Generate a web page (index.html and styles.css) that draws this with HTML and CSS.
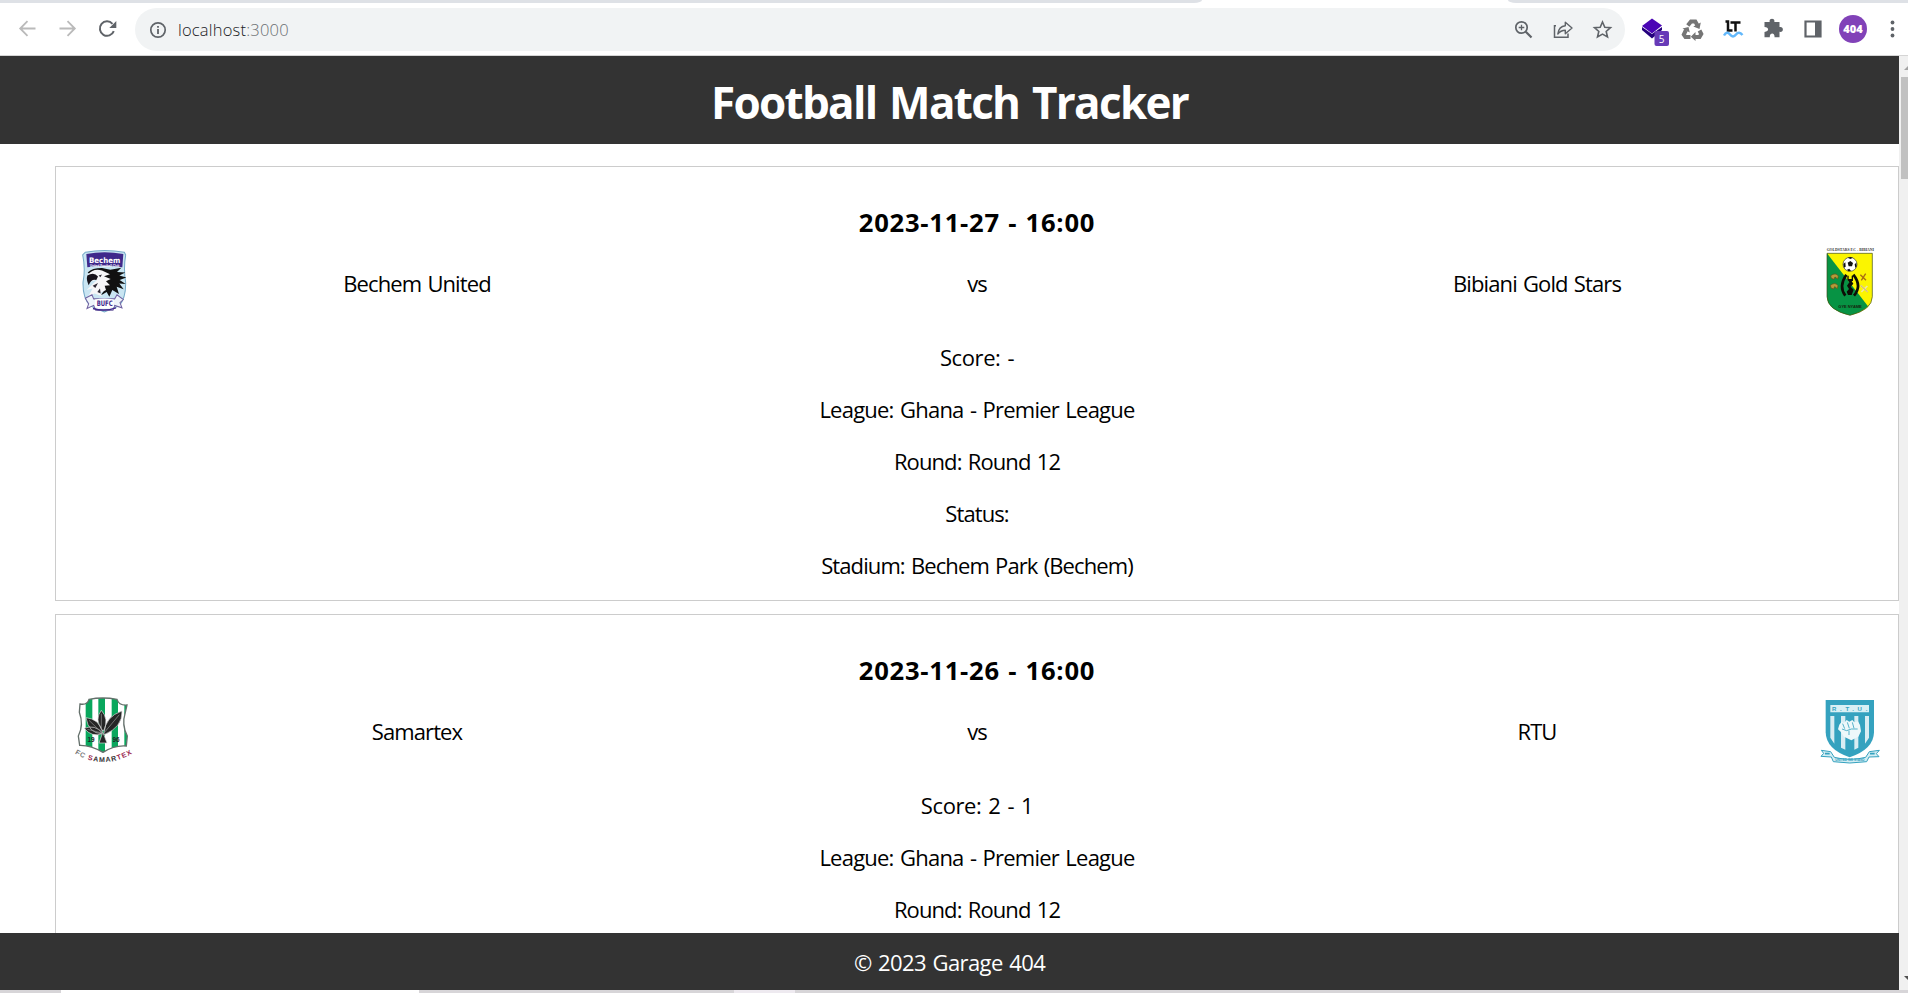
FILE: index.html
```html
<!DOCTYPE html>
<html lang="en">
<head>
<meta charset="utf-8">
<title>Football Match Tracker</title>
<link rel="stylesheet" href="styles.css">
</head>
<body>
<div class="browser">
  <div class="tabs"><div class="tab-before"></div><div class="active-tab"></div><div class="tab-after"></div></div>
  <div class="toolbar">
    <svg class="nav" width="120" height="52" viewBox="0 0 120 52" fill="none" stroke-width="1.8">
      <g stroke="#bababa"><path d="M35.500 25.500H20.500M27.500 18.200L20.200 25.500L27.500 32.800"/><path d="M59.500 25.500H74.500M67.500 18.200L74.800 25.500L67.500 32.800"/></g>
      <path d="M113.800 28.200A7.200 7.200 0 1 1 112.500 20.800" stroke="#5f6368" stroke-width="2"/><path d="M116.300 18V25H109.300Z" fill="#5f6368"/>
    </svg>
    <div class="omnibox">
      <svg class="info" width="18" height="18" viewBox="0 0 18 18"><circle cx="9" cy="9" r="7.200" fill="none" stroke="#5f6368" stroke-width="1.700"/><path d="M8.100 8h1.800v5H8.100zM8.100 5h1.800v1.800H8.100z" fill="#5f6368"/></svg>
      <span class="url">localhost<span class="port">:3000</span></span>
      <svg class="actions" width="110" height="44" viewBox="0 0 110 44" fill="none" stroke="#5f6368" stroke-width="1.700">
        <circle cx="16.500" cy="19.500" r="5.700"/><path d="M20.800 23.800L26.500 29.500" stroke-width="2.200"/><path d="M13.700 19.500h5.600M16.500 16.700v5.600" stroke-width="1.300"/>
        <path d="M51 17.800H49.500V29.300H63V25.500" stroke-width="1.500"/><path d="M52.800 26C53.500 20.500 56.500 18.200 60.300 17.800V14.200L67 20L60.300 25.700V22.200C57 22.200 54.800 23.300 52.800 26Z" stroke-width="1.400" stroke-linejoin="round"/>
        <path d="M97.500 14L99.800 19.200L105.500 19.700L101.200 23.500L102.500 29L97.500 26.100L92.500 29L93.800 23.500L89.500 19.700L95.200 19.200Z" stroke-width="1.600"/>
      </svg>
    </div>
    <svg class="extensions" width="283" height="52" viewBox="0 0 283 52">
      <g transform="translate(-1 0)">
      <path d="M18 24L28 31L38 24V27L28 35.500L18 27Z" fill="#24007d"/><path d="M28 15.500L38 22.500L28 30.500L18 23Z" fill="#4a05b5"/>
      <rect x="30.500" y="28" width="14.500" height="15" rx="2" fill="#673ab7"/><text x="37.700" y="40.300" class="badge-text">5</text>
      </g>
      <g transform="translate(-2 0)">
      <g fill="none" stroke="#757575" stroke-width="4"><path d="M64.800 22.500L68 18.500H72.300L74.500 22.500"/><path d="M76.500 27.500L78.300 31L76.500 34H71.500"/><path d="M67.500 34H62.500L60.800 31.500L63 27"/></g>
      <path d="M77.800 19.500L76.500 26L70.300 23.500ZM72.500 29V38L67.800 33.800ZM59.500 25.500L65.500 24L66.800 29.500Z" fill="#757575"/>
      </g>
      <g transform="translate(-1 0)">
      <g fill="none" stroke="#111" stroke-width="2.500"><path d="M101.500 18.500H104V27.500H108.500M106.500 19.500H116.500M111.500 19.500V28.500"/></g>
      <path d="M100 32.500C102 29 104 29 106 31.500S110 34 112 31.500S116 29 118.500 32" fill="none" stroke="#62b8fb" stroke-width="2.500"/>
      <path d="M140.500 19H145.700C144.500 14.500 151.500 14.500 150.300 19H155.500V24C160 23 160 29.800 155.500 28.800V34.200H150.500C151 29.300 145.500 29.300 145.800 34.200H140.500V29C145.300 28.500 145.300 24 140.500 24Z" fill="#5f6368"/>
      </g>
      <path d="M180.500 18.500H195.500V33.500H180.500Z" fill="none" stroke="#5f6368" stroke-width="2.200"/><path d="M190 18H196V34H190Z" fill="#5f6368"/>
      <circle cx="228" cy="26" r="14" fill="#8142b8"/><text x="228" y="30" class="avatar-text">404</text>
      <g fill="#5f6368"><circle cx="267.500" cy="19.500" r="1.900"/><circle cx="267.500" cy="26" r="1.900"/><circle cx="267.500" cy="32.500" r="1.900"/></g>
    </svg>
  </div>
</div>
<div class="viewport">
  <div class="page">
    <header class="header"><h1 class="title">Football Match Tracker</h1></header>
    <main class="matches">
      <article class="match">
        <h3 class="date">2023-11-27 - 16:00</h3>
        <div class="teams">
          <svg class="crest" viewBox="30 36 201 210">
            <g transform="translate(0 -2) scale(1 1.03)">
            <path d="M76 52Q133 42 193 52L197 60Q190 100 197 140Q198 185 178 208L133 226L90 208Q68 185 69 140Q77 100 68 60Z" fill="#c9e5f2" stroke="#75aac8" stroke-width="3"/>
            <path d="M79 57Q133 48 190 57L187 96Q133 88 82 96Z" fill="#40298b"/>
            <text x="134" y="83" class="crest-name" textLength="94" lengthAdjust="spacingAndGlyphs">Bechem</text>
            <text x="134" y="94" class="crest-sub" textLength="88" lengthAdjust="spacingAndGlyphs">United Football Club</text>
            <path d="M83 111Q96 98 126 98L151 103L184 97L171 110L196 111L178 120L199 126L179 133L197 145L178 143L191 160L170 153L177 174L157 162L148 182L140 168L122 178L135 160L119 148L130 140L100 125Z" fill="#111"/>
            <path d="M84 117Q100 98 126 105L150 116L132 122L152 130L138 137L150 148L134 150L138 162L122 170L126 180L104 172L85 180L98 158L80 162L103 140L112 132L88 138Z" fill="#f6f6f8"/>
            <path d="M82 120Q102 108 114 123L109 133Q95 128 86 148Q78 132 82 120Z" fill="#17131b"/><path d="M116 120l10-3-5 8zM98 150l16-8-8 14zM112 168l8-10 2 14z" fill="#2b2733"/>
            <path d="M76 186L96 176L101 188H164L171 176L190 190L180 199L186 214L164 207L159 221H107L101 207L81 216L86 202Z" fill="#eef4fa" stroke="#7061a1" stroke-width="3"/>
            <path d="M105 190Q133 184 161 190V212Q133 219 105 212Z" fill="#fff"/><text x="134" y="210" class="crest-code" textLength="48" lengthAdjust="spacingAndGlyphs">BUFC</text><path d="M99 216Q133 226 168 214" fill="none" stroke="#40298b" stroke-width="4"/>
            </g>
          </svg>
          <span class="team">Bechem United</span><span class="team">vs</span><span class="team">Bibiani Gold Stars</span>
          <svg class="crest" viewBox="51 36 201 210">
            <text x="151" y="48" class="gold-name" textLength="142" lengthAdjust="spacingAndGlyphs">GOLDSTARS F.C - BIBIANI</text>
            <path d="M81 55H217V185Q216 225 150 241Q82 225 81 185Z" fill="#fbf500"/><path d="M81 55L204 214Q185 232 150 241Q82 225 81 185Z" fill="#079344"/><path d="M81 55H217V185Q216 225 150 241Q82 225 81 185Z" fill="none" stroke="#394718" stroke-width="2"/>
            <circle cx="150" cy="88" r="21" fill="#fff" stroke="#333" stroke-width="2"/><path d="M143 83L151 78L159 84L156 94L146 94ZM143 68L151 72L159 68L151 66ZM130 87L136 82L137 95L132 98ZM169 83L164 88L166 99L170 94ZM141 104L148 101L153 108L145 109Z" fill="#111"/>
            <path d="M139 119Q115 154 136 182M160 119Q187 153 162 182" fill="none" stroke="#0c0d06" stroke-width="8"/><path d="M146 122V132H155V122H159V138H155L160 146L152 155L161 164L155 180H144L140 170L147 162L141 152L148 142L142 134V122Z" fill="#0c0d06"/>
            <path d="M92 122Q107 111 115 123L113 132L105 126L102 133L94 130ZM91 151Q106 140 114 152L112 161L104 155L101 162L93 159Z" fill="#b59a3a" stroke="#624f13" stroke-width="2"/>
            <path d="M181 119L198 136M197 116L184 136" stroke="#a76d13" stroke-width="4"/><path d="M182 151L203 171M202 153L184 171" stroke="#eee6a8" stroke-width="5"/><path d="M182 151L203 171" stroke="#b98730" stroke-width="2"/>
            <text x="150" y="218" class="gold-motto" textLength="70" lengthAdjust="spacingAndGlyphs">GYE NYAME</text>
          </svg>
        </div>
        <div class="details"><p class="score">Score: -</p><p class="league">League: Ghana - Premier League</p><p>Round: Round 12</p><p>Status:</p><p>Stadium: Bechem Park (Bechem)</p></div>
      </article>
      <article class="match">
        <h3 class="date">2023-11-26 - 16:00</h3>
        <div class="teams">
          <svg class="crest" viewBox="30 30 201 210">
            <defs><clipPath id="samartex-shield"><path d="M87 43Q128 35 171 43Q177 62 201 60L196 82Q184 120 202 153L199 183Q164 180 129 202Q92 180 59 181L55 153Q72 120 58 82L60 57Q82 61 87 43Z"/></clipPath></defs>
            <g clip-path="url(#samartex-shield)"><path d="M50 35H210V210H50Z" fill="#fff"/><path d="M77 35h20v175H77zM115 35h20v175h-20zM155 35h19v175h-19zM193 35h14v175h-14z" fill="#09a75d"/></g>
            <path d="M87 43Q128 35 171 43Q177 62 201 60L196 82Q184 120 202 153L199 183Q164 180 129 202Q92 180 59 181L55 153Q72 120 58 82L60 57Q82 61 87 43Z" fill="none" stroke="#64706b" stroke-width="4"/>
            <path d="M126 136Q103 102 124 76Q147 102 132 136ZM125 146Q86 145 78 98Q115 101 128 139ZM132 143Q136 95 186 78Q188 127 132 149ZM127 146Q95 158 73 130Q104 117 130 145L141 174H117Z" fill="#252525" stroke="#ddd" stroke-width="2"/><path d="M124 86V137M87 106L127 145M178 89L131 145M82 133L130 145" stroke="#999" stroke-width="2"/>
            <text x="93" y="171" class="samartex-year">19</text><text x="168" y="171" class="samartex-year">96</text>
            <path id="samartex-arc" d="M44 205Q132 260 226 200" fill="none"/><text class="samartex-name"><textPath href="#samartex-arc"><tspan fill="#777">FC </tspan><tspan fill="#9a2851">S</tspan><tspan>AMAR</tspan><tspan fill="#9a2851">TEX</tspan></textPath></text>
          </svg>
          <span class="team">Samartex</span><span class="team">vs</span><span class="team">RTU</span>
          <svg class="crest" viewBox="51 30 201 210">
            <path d="M77 45H222V142Q221 193 149 217Q78 193 77 142Z" fill="#35a2bf"/><path d="M91 60H207V82H91Z" fill="#d9f0f5"/><text x="149" y="78" class="rtu-name" textLength="106">R.T.U.</text>
            <path d="M91 93H103V176L91 158ZM123 93H136V194L123 188ZM163 93H175V188L163 194ZM195 93H207V158L195 176Z" fill="#d9edf3"/>
            <path d="M118 119L125 110L132 114L140 105L148 110L157 105L163 112L174 109L180 120L183 139L175 155L154 166L132 155L122 140L114 133Z" fill="#edf8fa"/><path d="M128 116L134 131M142 112L148 130M157 112L162 130M126 132L140 137L154 132L173 132M147 137V150" fill="none" stroke="#35a2bf" stroke-width="2.500"/>
            <path d="M64 196L92 200L103 217Q149 229 197 217L208 200L238 196L229 206L237 215L207 216L200 230Q149 238 100 230L94 216L63 214L71 205Z" fill="#d2edf3" stroke="#35a2bf" stroke-width="3"/><text x="150" y="228" class="rtu-motto" textLength="88" lengthAdjust="spacingAndGlyphs">UNITED WE STAND</text><path d="M75 206h14M210 206h14" stroke="#35a2bf" stroke-width="5"/>
          </svg>
        </div>
        <div class="details"><p class="score">Score: 2 - 1</p><p class="league">League: Ghana - Premier League</p><p>Round: Round 12</p></div>
      </article>
    </main>
    <footer class="footer">© 2023 Garage 404</footer>
  </div>
  <div class="scrollbar">
    <svg width="9" height="21" viewBox="0 0 9 21"><path d="M5 14L9 10V14Z" fill="#a3a3a3"/></svg>
    <div class="thumb"></div>
    <svg class="arrow-down" width="9" height="20" viewBox="0 0 9 20"><path d="M5 6H9V10Z" fill="#505050"/></svg>
  </div>
</div>
<div class="taskbar"><div class="task"></div><div class="task-light"></div></div>
</body>
</html>
```

FILE: styles.css
```css
* { box-sizing: border-box; }
body { margin: 0; width: 1908px; height: 993px; overflow: hidden; background: #fff; color: #000; font: 22px/30px "Open Sans", "Noto Sans", sans-serif; letter-spacing: -0.9px; word-spacing: 1.4px; display: flex; flex-direction: column; }
svg { display: block; flex: none; letter-spacing: 0; word-spacing: 0; }
.browser { height: 56px; border-bottom: 1px solid #d5d5d5; flex: none; }
.tabs { height: 3px; display: flex; }
.tab-before { width: 1202px; background: #dee1e6; border-bottom-right-radius: 8px 3px; }
.active-tab { width: 306px; }
.tab-after { flex: 1; background: #dee1e6; border-bottom-left-radius: 8px 3px; }
.toolbar { height: 52px; display: flex; background: #fff; }
.nav { margin-right: 15px; }
.omnibox { width: 1490px; height: 43px; margin-top: 5px; border-radius: 22px; background: #f1f3f4; display: flex; align-items: center; padding: 0 10px 0 14px; }
.info { margin-right: 11px; }
.url { font-size: 16.5px; font-weight: 300; letter-spacing: 0.2px; color: #202124; }
.port { color: #6a6e72; }
.actions { margin-left: auto; }
.badge-text { font: 10px "Open Sans", sans-serif; fill: #fff; text-anchor: middle; }
.avatar-text { font: 800 11px "Open Sans", sans-serif; fill: #fff; text-anchor: middle; }
.viewport { flex: 1; min-height: 0; display: flex; }
.page { width: 1899px; display: flex; flex-direction: column; flex: none; min-height: 0; }
.header { height: 88px; padding-top: 4px; flex: none; background: #333; color: #fff; display: flex; justify-content: center; align-items: center; }
.title { margin: 0; font-size: 44px; line-height: 60px; font-weight: 700; letter-spacing: -1.7px; word-spacing: 3px; }
.matches { flex: 1; min-height: 0; overflow: hidden; padding: 22px 0 0 55px; display: flex; flex-direction: column; gap: 13px; }
.match { height: 435px; flex: none; border: 1px solid #ccc; padding: 38px 14px 19px; text-align: center; }
.date { margin: 0 0 6px; font-size: 25.6px; line-height: 36px; font-weight: 700; letter-spacing: 0.75px; word-spacing: 1px; }
.teams { display: grid; grid-template-columns: 67px 1fr 1fr 1fr 67px; align-items: center; height: 70px; }
.team { padding-top: 1px; }
.crest { width: 67px; height: 70px; }
.details { margin-top: 24.500px; display: flex; flex-direction: column; gap: 22px; }
.details p { margin: 0; }
.details .score { letter-spacing: -0.4px; word-spacing: 1.6px; }
.details .league { letter-spacing: -0.77px; }
.footer { height: 57px; flex: none; background: #333; color: #fff; display: flex; justify-content: center; align-items: center; letter-spacing: -0.6px; }
.scrollbar { width: 9px; background: #f0f0f0; display: flex; flex-direction: column; }
.thumb { height: 102px; margin-left: 2px; background: #c1c1c1; }
.arrow-down { margin-top: auto; }
.taskbar { height: 3px; flex: none; background: #d7d5d8; display: flex; }
.task { width: 358px; margin-left: 61px; background: #fff; }
.task-light { width: 61px; margin-left: 315px; background: #eeeaf0; }
.crest-name { font: 900 22px "DejaVu Sans", sans-serif; fill: #fff; text-anchor: middle; }
.crest-sub { font: 700 8px "Liberation Sans", sans-serif; fill: #fff; text-anchor: middle; }
.crest-code { font: 900 22px "DejaVu Sans", sans-serif; fill: #40298b; text-anchor: middle; }
.gold-name { font: 700 12px "Liberation Serif", serif; fill: #333; text-anchor: middle; }
.gold-motto { font: 700 13px "Liberation Sans", sans-serif; fill: #17220d; text-anchor: middle; }
.samartex-year { font: 700 19px "Liberation Sans", sans-serif; fill: #222; text-anchor: middle; }
.samartex-name { font: 700 21px "Liberation Sans", sans-serif; fill: #333; letter-spacing: 3px; }
.rtu-name { font: 700 18px "Liberation Sans", sans-serif; fill: #35a2bf; text-anchor: middle; }
.rtu-motto { font: 700 9px "Liberation Sans", sans-serif; fill: #35a2bf; text-anchor: middle; }
```
